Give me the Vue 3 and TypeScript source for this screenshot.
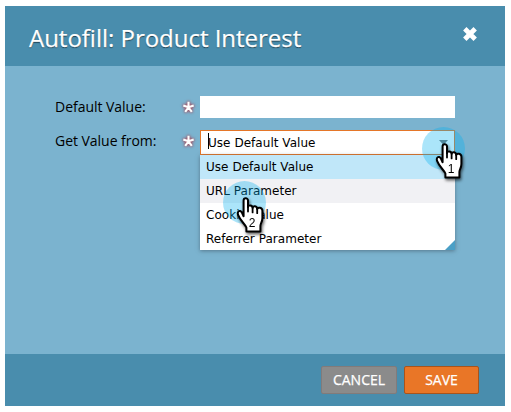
<script setup lang="ts">
import { ref } from 'vue'

interface Pointer {
  step: number
  cls: string
}

const options: string[] = ['Use Default Value', 'URL Parameter', 'Cookie Value', 'Referrer Parameter']
const selected = ref<string>(options[0])
const hovered = ref<string>(options[1])
const pointers: Pointer[] = [
  { step: 1, cls: 'pointer-trigger' },
  { step: 2, cls: 'pointer-option' },
]
</script>

<template>
  <div class="page">
    <section class="dialog">
      <header class="head">
        <h1 class="title">Autofill: Product Interest</h1>
        <button class="close" aria-label="Close">
          <svg width="16" height="16" viewBox="0 0 16 16">
            <path d="M2.8 2.8L13.2 13.2M13.2 2.8L2.8 13.2" />
          </svg>
        </button>
      </header>

      <div class="body">
        <div class="row">
          <label class="label">Default Value:</label>
          <span class="req">
            <svg width="20" height="20" viewBox="0 0 20 20">
              <path d="M10.5 10.3V4.7M10.5 10.3L5.3 8.5M10.5 10.3L15.7 8.5M10.5 10.3L7.2 14.8M10.5 10.3L13.8 14.8" />
            </svg>
          </span>
          <div class="input"></div>
        </div>
        <div class="row second">
          <label class="label">Get Value from:</label>
          <span class="req">
            <svg width="20" height="20" viewBox="0 0 20 20">
              <path d="M10.5 10.3V4.7M10.5 10.3L5.3 8.5M10.5 10.3L15.7 8.5M10.5 10.3L7.2 14.8M10.5 10.3L13.8 14.8" />
            </svg>
          </span>
          <div class="combo">
            <div class="field">
              <span class="caret"></span>
              <span class="value">{{ selected }}</span>
              <svg class="arrow" width="9" height="5" viewBox="0 0 9 5"><path d="M0 0H9L4.5 5Z" fill="#777" /></svg>
            </div>
            <ul class="list">
              <li
                v-for="o in options"
                :key="o"
                class="option"
                :class="{ selected: o === selected, hovered: o === hovered }"
              >{{ o }}</li>
            </ul>
          </div>
        </div>
      </div>

      <footer class="foot">
        <button class="btn cancel">CANCEL</button>
        <button class="btn save">SAVE</button>
      </footer>
    </section>

    <div v-for="p in pointers" :key="p.step" class="pointer" :class="p.cls">
      <svg width="56" height="64" viewBox="0 0 56 64">
        <circle cx="21.5" cy="21.5" r="21.5" fill="#00b0f0" fill-opacity="0.33" />
        <g class="hand" transform="translate(14 16)">
          <path
            d="M6.6 19.2V3.6C6.6 0.6 11 0.6 11 3.6V10.2C11 7.6 15.6 7.8 15.6 10.8C15.8 8.4 20.2 8.8 20.2 12C20.8 9.8 25.4 10.4 25.4 13.8V21C25.4 25 23.4 26.5 23.4 29V34.6H9.4V30.5C8 27 3.4 24 1.2 18.2C-0.2 14.4 2.8 12.4 4.8 15.4L6.6 19.2Z"
            fill="#fff"
            stroke="#000"
            stroke-width="2"
            stroke-linejoin="round"
          />
          <path d="M11 9.5V14.6M15.6 10.5V15.4M20.2 11.5V16.2" stroke="#000" stroke-width="1.8" stroke-linecap="round" />
          <text x="15" y="30" text-anchor="middle">{{ p.step }}</text>
        </g>
      </svg>
    </div>
  </div>
</template>

<style>
body {
  background: #fff;
}
</style>

<style scoped>
.page {
  position: relative;
  box-sizing: border-box;
  width: 511px;
  height: 412px;
  padding: 6px 6px 6px 5px;
  overflow: hidden;
  font-family: 'Open Sans', sans-serif;
}
.dialog {
  display: flex;
  flex-direction: column;
  width: 500px;
  height: 400px;
  background: #7bb3cf;
}
.head {
  display: flex;
  justify-content: space-between;
  box-sizing: border-box;
  height: 60px;
  padding: 14px 27px 0 24px;
  background: #498dad;
}
.title {
  margin: 0;
  color: #fff;
  font-size: 24px;
  line-height: 36px;
  font-weight: 400;
  letter-spacing: -0.02px;
  white-space: nowrap;
  text-shadow: 0 1px 1px #1f3d4c;
  -webkit-text-stroke: 0.25px #fff;
}
.close {
  width: 16px;
  height: 16px;
  margin-top: 6px;
  padding: 0;
  border: 0;
  background: none;
}
.close svg {
  display: block;
}
.close path {
  stroke: #fff;
  stroke-width: 4.8;
}
.body {
  flex: 1;
  padding: 30px 50px 0;
}
.row {
  display: flex;
  height: 22px;
}
.second {
  margin-top: 12px;
}
.label {
  width: 123px;
  color: #000;
  font-size: 14px;
  line-height: 22px;
  letter-spacing: -0.03px;
  white-space: nowrap;
}
.req {
  width: 22px;
  height: 22px;
}
.req svg {
  display: block;
  margin-top: 1px;
  overflow: visible;
  filter: drop-shadow(0 0 1.5px #b03a48) drop-shadow(0 0 1px rgba(176, 58, 72, 0.35));
}
.req path {
  fill: none;
  stroke: #fff;
  stroke-width: 2.1;
}
.input {
  width: 255px;
  height: 22px;
  background: #fff;
}
.combo {
  width: 255px;
  font-family: 'DejaVu Sans', sans-serif;
  font-size: 12px;
  letter-spacing: 0.04px;
}
.field {
  display: flex;
  align-items: center;
  box-sizing: border-box;
  height: 25px;
  padding: 0 6px 0 7px;
  border: 1px solid #e57628;
  background: #fff;
}
.caret {
  width: 1px;
  height: 16px;
  margin: 0 -1px 3px 0;
  background: #000;
}
.value {
  flex: 1;
}
.list {
  position: relative;
  height: 95px;
  margin: 0;
  padding: 0;
  list-style: none;
  background: #fff;
  box-shadow: 0 1px 4px rgba(60, 80, 95, 0.6);
}
.list::after {
  content: '';
  position: absolute;
  right: 0;
  bottom: 0;
  width: 10px;
  height: 10px;
  background: #4a9fc6;
  clip-path: polygon(100% 0, 100% 100%, 0 100%);
}
.option {
  height: 24px;
  padding-left: 6px;
  line-height: 24px;
}
.selected {
  background: #c0e7f9;
}
.hovered {
  background: #f1f1f4;
}
.foot {
  display: flex;
  justify-content: flex-end;
  gap: 7px;
  box-sizing: border-box;
  height: 52px;
  padding: 12px 26px 0 0;
  background: #498dad;
}
.btn {
  box-sizing: border-box;
  width: 76px;
  height: 28px;
  padding: 0;
  border: 1px solid #817b7b;
  border-radius: 2px;
  background: #8b8b8b;
  color: #fff;
  font-family: 'Open Sans', sans-serif;
  font-size: 14px;
  line-height: 26px;
  -webkit-text-stroke: 0.25px #fff;
}
.save {
  width: 75px;
  border-color: #a8541c;
  background: #e97627;
}
.pointer {
  position: absolute;
  pointer-events: none;
}
.pointer svg {
  display: block;
}
.pointer-trigger {
  left: 422px;
  top: 127px;
}
.pointer-option {
  left: 223px;
  top: 181px;
}
.hand {
  filter: drop-shadow(1px 2px 1.5px rgba(0, 0, 0, 0.6));
}
.hand text {
  fill: #000;
  font-family: 'Liberation Sans', sans-serif;
  font-size: 12px;
}
</style>
